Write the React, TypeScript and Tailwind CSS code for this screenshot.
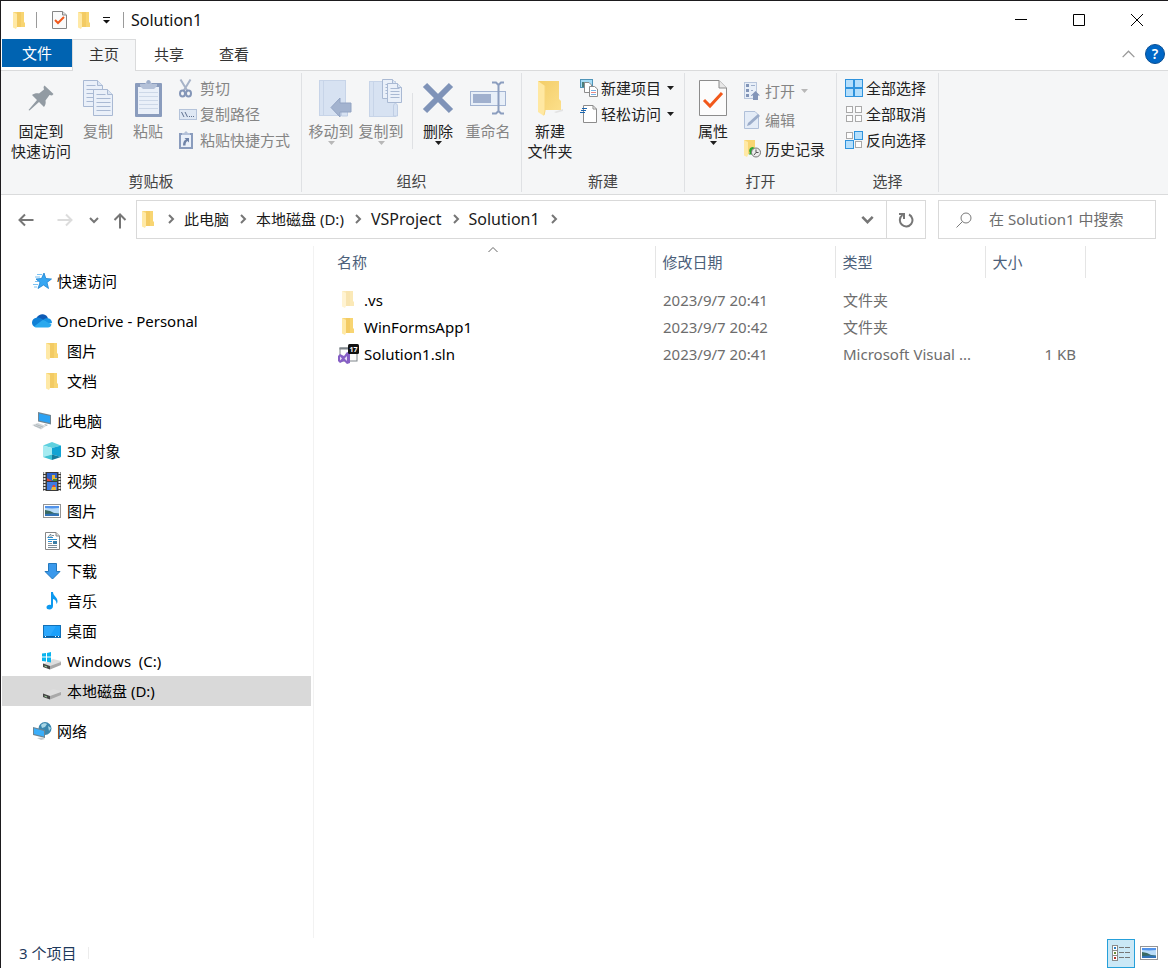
import type { ReactNode } from "react";

type IconProps = { className?: string };

/* ---------- icons ---------- */

function FolderIcon({ className = "" }: IconProps) {
  return (
    <svg width="13" height="17" viewBox="0 0 13 17" className={`shrink-0 ${className}`} aria-hidden="true">
      <path d="M0 0H11V10L12 11V15H3Z" fill="#f8d572" />
      <path d="M4 0H8V15H4Z" fill="#f0c45c" opacity="0.6" />
      <path d="M0 0L4 2V15L3 17L0 15.500Z" fill="#ffe9a6" />
    </svg>
  );
}

function BigFolderIcon() {
  return (
    <svg width="26" height="35" viewBox="0 0 26 35" aria-hidden="true">
      <defs>
        <linearGradient id="bigFolder" x1="0" y1="0" x2="1" y2="1">
          <stop offset="0" stopColor="#f3cd68" />
          <stop offset="1" stopColor="#fcdf8a" />
        </linearGradient>
      </defs>
      <path d="M17 31L26 28V30L19 32Z" fill="#e3e3e3" />
      <path d="M1 0H22V18L24 20V29H7Z" fill="url(#bigFolder)" />
      <path d="M1 0L8 5V30L7 35L1 31Z" fill="#ffe8a2" />
      <path d="M8 5V30L7 34" stroke="#f7d67c" fill="none" />
    </svg>
  );
}

function CheckDocIcon({ big = false }: { big?: boolean }) {
  return big ? (
    <svg width="28" height="36" viewBox="0 0 28 36" aria-hidden="true">
      <path d="M0.500 0.500H20L27.500 8V35.500H0.500Z" fill="#fcfcfc" stroke="#8c8c8c" />
      <path d="M20 0.500V8H27.500" fill="#e8e8e8" stroke="#8c8c8c" />
      <path d="M5 20L11 26L23 13" fill="none" stroke="#f1581b" strokeWidth="3" />
    </svg>
  ) : (
    <svg width="15" height="18" viewBox="0 0 15 18" aria-hidden="true">
      <path d="M0.500 0.500H10.500L14.500 4V17.500H0.500Z" fill="#fafafa" stroke="#868686" />
      <path d="M10.500 0.500V4H14.500" fill="#ddd" stroke="#868686" />
      <path d="M3 9L6 12L12 6" fill="none" stroke="#f1581b" strokeWidth="2" />
    </svg>
  );
}

function Caret({ className = "text-[#1e1e1e]" }: IconProps) {
  return (
    <svg width="7" height="4" viewBox="0 0 7 4" className={`shrink-0 ${className}`} aria-hidden="true">
      <path d="M0 0H7L3.500 4Z" fill="currentColor" />
    </svg>
  );
}

function PinIcon() {
  return (
    <svg width="26" height="26" viewBox="0 0 26 26" aria-hidden="true">
      <path
        d="M16.500 0.500L25.500 9L24 10.500L21.500 10L17.500 15.500C18 18 17.500 20 16 22L11 17L1.500 25.500L0.500 25L9 15L4 10C6 8.500 8.500 8 11 8.500L16 4.500L15.500 2Z"
        fill="#929ba3"
      />
    </svg>
  );
}

function Page({ x, y, w, h, fold, step }: { x: number; y: number; w: number; h: number; fold: number; step: number }) {
  const lines = [];
  for (let ly = y + 5; ly < y + h - 2; ly += step) lines.push(ly);
  return (
    <g stroke="#a9b9d3">
      <path d={`M${x} ${y}H${x + w - fold}L${x + w} ${y + fold}V${y + h}H${x}Z`} fill="#eaf0f9" />
      <path d={`M${x + w - fold} ${y}V${y + fold}H${x + w}`} fill="#dbe5f3" />
      {lines.map((ly) => (
        <path key={ly} d={`M${x + 3} ${ly}H${ly < y + fold + 1 ? x + w - fold - 2 : x + w - 2}`} />
      ))}
    </g>
  );
}

function CopyIcon() {
  return (
    <svg width="31" height="37" viewBox="0 0 31 37" aria-hidden="true">
      <Page x={0.5} y={0.5} w={19} h={26} fold={5} step={4} />
      <Page x={10.5} y={9.5} w={19} h={26} fold={5} step={4} />
    </svg>
  );
}

function PasteIcon() {
  return (
    <svg width="27" height="37" viewBox="0 0 27 37" aria-hidden="true">
      <rect x="0" y="3" width="27" height="34" rx="1" fill="#8a9cbd" />
      <rect x="3" y="7" width="21" height="27" fill="#eaf0f9" />
      {[12, 16, 20, 24, 28].map((y) => (
        <path key={y} d={`M4 ${y + 0.5}H23`} stroke="#cdd8e8" />
      ))}
      <path d="M5 4H10L12 1H15L17 4H22V6L19 9H8L5 6Z" fill="#b4c1d8" />
      <circle cx="13.500" cy="2" r="2" fill="#9fafca" />
    </svg>
  );
}

function CutIcon() {
  return (
    <svg width="13" height="19" viewBox="0 0 13 19" fill="none" aria-hidden="true">
      <path d="M1.500 0.500L8.500 12M11.500 0.500L4.500 12" stroke="#a7b3c8" strokeWidth="2" />
      <ellipse cx="3.500" cy="14.500" rx="2.500" ry="3" stroke="#8496b8" strokeWidth="2" />
      <ellipse cx="9.500" cy="14.500" rx="2.500" ry="3" stroke="#8496b8" strokeWidth="2" />
    </svg>
  );
}

function CopyPathIcon() {
  return (
    <svg width="18" height="11" viewBox="0 0 18 11" aria-hidden="true">
      <rect x="0.500" y="0.500" width="17" height="10" fill="#dfe8f4" stroke="#b4c3da" />
      <path d="M2.500 3L5 8M6 3L8.500 8" stroke="#5f708f" />
      <path d="M10 7.500H11M12 7.500H13M14 7.500H15" stroke="#5f708f" />
    </svg>
  );
}

function ShortcutIcon() {
  return (
    <svg width="14" height="18" viewBox="0 0 14 18" aria-hidden="true">
      <rect x="0" y="2" width="14" height="16" fill="#8a9cbd" />
      <rect x="2" y="4" width="10" height="12" fill="#eaf0f9" />
      <path d="M3 2H5L7 0L9 2H11V4H3Z" fill="#b4c1d8" />
      <path d="M5.500 7H10V11.500L8.500 10C7 11 6.500 12 6.500 14.500H4C4 11 5 9.500 7 8.500Z" fill="#6f83a8" />
    </svg>
  );
}

function MoveToIcon() {
  return (
    <svg width="41" height="37" viewBox="-8 0 41 37" aria-hidden="true">
      <rect x="0.500" y="0.500" width="26" height="35" fill="#d7e2f2" stroke="#c7d4e8" />
      <path d="M4.500 1V35" stroke="#c7d4e8" />
      <path d="M22.500 23V36H28.500V25" fill="#d7e2f2" stroke="#c0cee4" />
      <path d="M12 27.500L21 18V23H32V32H21V37Z" fill="#a3b3cf" stroke="#93a4c3" />
    </svg>
  );
}

function CopyToIcon() {
  return (
    <svg width="44" height="38" viewBox="-10 0 44 38" aria-hidden="true">
      <rect x="0.500" y="2.500" width="26" height="35" fill="#d7e2f2" stroke="#c7d4e8" />
      <path d="M4.500 3V37" stroke="#c7d4e8" />
      <path d="M24.500 37V27Q24.500 24.500 26.500 24.500T28.500 27V37Z" fill="#d7e2f2" stroke="#c0cee4" />
      <Page x={13.5} y={0.5} w={14} h={19} fold={4} step={3} />
      <Page x={18.5} y={4.5} w={14} h={19} fold={4} step={3} />
    </svg>
  );
}

function DeleteIcon() {
  return (
    <svg width="32" height="32" viewBox="0 0 32 32" aria-hidden="true">
      <path d="M3 3L29 29M29 3L3 29" stroke="#7f93b8" strokeWidth="6" />
    </svg>
  );
}

function RenameIcon() {
  return (
    <svg width="37" height="34" viewBox="0 0 37 34" fill="none" aria-hidden="true">
      <rect x="0.500" y="10.500" width="35" height="14" fill="#e8eff8" stroke="#a3b4d2" />
      <rect x="3" y="13" width="18" height="9" fill="#a0b0ce" />
      <path d="M22 1.500H26L28.500 4L31 1.500H34M22 32.500H26L28.500 30L31 32.500H34M28.500 4V30" stroke="#8c9ebf" strokeWidth="2" />
    </svg>
  );
}

function NewItemIcon() {
  return (
    <svg width="18" height="18" viewBox="0 0 18 18" aria-hidden="true">
      <rect x="0.500" y="0.500" width="12" height="8" fill="#a6dcf5" stroke="#4f94b8" />
      <path d="M2 8V3H5V8Z" fill="#4a7f7a" />
      <path d="M4.500 3.500H9L11.500 6V13.500H4.500Z" fill="#fff" stroke="#8c8c8c" />
      <path d="M9.500 7.500H14.500L17.500 10V17.500H9.500Z" fill="#fff" stroke="#8c8c8c" />
      <path d="M11 11.500H16M11 15.500H16" stroke="#78b2e4" />
      <path d="M11 13.500H16" stroke="#e58a8a" />
    </svg>
  );
}

function EasyAccessIcon() {
  return (
    <svg width="18" height="18" viewBox="0 0 18 18" aria-hidden="true">
      <path d="M3.500 0.500H13L16.500 4V17.500H3.500Z" fill="#fff" stroke="#8c8c8c" />
      <path d="M13 0.500V4H16.500" fill="none" stroke="#8c8c8c" />
      <path d="M2 3.500H7M1 5.500H6M0 7.500H5" fill="none" stroke="#1b66b0" />
    </svg>
  );
}

function OpenIcon() {
  return (
    <svg width="16" height="18" viewBox="0 0 16 18" aria-hidden="true">
      <rect x="0.500" y="0.500" width="12" height="16" fill="#e8eff8" stroke="#b8c6dc" />
      <path d="M2 2H5V5H2ZM2 7H5V10H2ZM2 12H5V15H2Z" fill="#8295b8" />
      <path d="M7 3.500H11M7 8.500H9M7 13.500H8" stroke="#9fb0cc" />
      <path d="M11.500 9L16 13.500H14V18H9V13.500H7Z" fill="#8295b8" />
    </svg>
  );
}

function EditIcon() {
  return (
    <svg width="17" height="18" viewBox="0 0 17 18" aria-hidden="true">
      <path d="M0.500 0.500H11L14.500 4V17.500H0.500Z" fill="#e4ecf7" stroke="#b0c0d9" />
      <path d="M3 15L4 12L14 3L16 5L6 14Z" fill="#9bacc9" />
    </svg>
  );
}

function HistoryIcon() {
  return (
    <svg width="17" height="18" viewBox="0 0 17 18" aria-hidden="true">
      <path d="M0 0H11V14H3Z" fill="#f8d572" />
      <path d="M0 0L4 2V15L3 17L0 15.500Z" fill="#ffe9a6" />
      <path d="M9 7C5 7.500 4.500 11 6 13L4.500 14.500H10V10L8 11.500C7.500 10 8.500 9 11 8.500Z" fill="#2ea836" />
      <circle cx="12" cy="12.500" r="4.500" fill="#ececec" stroke="#777" />
      <path d="M12 9.500V12.500H14.500M12 12.500L10 15" stroke="#555" fill="none" />
    </svg>
  );
}

function SelectIcon({ on }: { on: boolean[] }) {
  const spots = [[0, 0], [9, 0], [0, 9], [9, 9]];
  return (
    <svg width="18" height="18" viewBox="0 0 18 18" aria-hidden="true">
      {spots.map(([x, y], i) =>
        on[i] ? (
          <rect key={i} x={x + 0.5} y={y + 0.5} width="8" height="8" fill="#b5dffc" stroke="#2f93dd" />
        ) : (
          <rect key={i} x={x + 1.5} y={y + 1.5} width="6" height="6" fill="#fdfdfd" stroke="#a9a9a9" />
        ),
      )}
    </svg>
  );
}

function Chevron({ dir, size = 10, width = 1, className = "" }: { dir: "up" | "down" | "right"; size?: number; width?: number; className?: string }) {
  const d = { up: "M0.500 7L5 2.500L9.500 7", down: "M1 3L5 7L9 3", right: "M3 1L7 5L3 9" }[dir];
  return (
    <svg width={size} height={size} viewBox="0 0 10 10" fill="none" className={`shrink-0 ${className}`} aria-hidden="true">
      <path d={d} stroke="currentColor" strokeWidth={width} />
    </svg>
  );
}

function ArrowIcon({ className = "" }: IconProps) {
  return (
    <svg width="16" height="14" viewBox="0 0 16 14" fill="none" className={className} aria-hidden="true">
      <path d="M1 7H15.500M7 1.500L1.500 7L7 12.500" stroke="currentColor" strokeWidth="2" />
    </svg>
  );
}

function StarIcon() {
  return (
    <svg width="19" height="17" viewBox="0 0 19 17" aria-hidden="true">
      <path d="M11 0L12.800 5.500L18.500 6L14 9.500L15.500 15.500L10.500 12L5 15.500L7 9.500L3 6L8.500 5.500Z" fill="#36a6f2" stroke="#1c82d0" strokeWidth="0.800" />
      <path d="M4 1.500H9M2 4H7M0 11.500H5M1 14H4M2 8.500H5" stroke="#7cc3f3" />
    </svg>
  );
}

function CloudIcon() {
  return (
    <svg width="20" height="14" viewBox="0 0 20 14" aria-hidden="true">
      <path d="M4.500 4C6 1 8.500 0 11 0.200C13.500 0.500 15.300 2 16 4.500L10 8Z" fill="#0d5ab5" />
      <path d="M4.500 3.800C7 3 9 4.500 11.500 6L3 13C1 12.500 0 10.500 0 8.500C0 6 2 4 4.500 3.800Z" fill="#1080d6" />
      <path d="M11 6C12.500 4.500 14 4 16 4.300C18.500 4.800 20 6.500 20 9L16 10Z" fill="#1694e4" />
      <path d="M11 5.800L19.500 10.500C19 12.300 17.800 13.500 16 13.500H4.500C3.500 13.500 2.500 13 2 12.500Z" fill="#2aa9ee" />
    </svg>
  );
}

function ComputerIcon() {
  return (
    <svg width="20" height="18" viewBox="0 0 20 18" aria-hidden="true">
      <path d="M6 0L19 3V12.500L6 9.500Z" fill="#6f8593" />
      <path d="M7 1.500L18 4V11L7 8.500Z" fill="#2ba2f4" />
      <path d="M0 13L6 11L14 14L9 17.500Z" fill="#d3d8db" />
      <path d="M2 13.500L9 16M4 12.500L11 15" stroke="#aab2b6" strokeWidth="0.800" />
      <path d="M12 12L16 13L14 14Z" fill="#a0abb3" />
    </svg>
  );
}

function CubeIcon() {
  return (
    <svg width="18" height="18" viewBox="0 0 18 18" aria-hidden="true">
      <path d="M9 0L18 3.500L9 6L0 3.500Z" fill="#5fd0de" />
      <path d="M0 3.500L9 6V12.500L0 15Z" fill="#a5ebf1" />
      <path d="M9 6L18 3.500V15L9 12.500Z" fill="#11a3d3" />
      <path d="M0 15L9 12.500V18Z" fill="#3fc1d2" />
      <path d="M9 12.500L18 15L9 18Z" fill="#147c9d" />
    </svg>
  );
}

function VideoIcon() {
  return (
    <svg width="18" height="19" viewBox="0 0 18 19" aria-hidden="true">
      <rect width="18" height="19" fill="#3a3a3a" />
      <rect x="4" y="1" width="10" height="8" fill="#2f62c9" />
      <rect x="4" y="10" width="10" height="8" fill="#3f7be0" />
      <path d="M9 3H12V6H14V8H9ZM9 15H13V18H8Z" fill="#e8b93a" />
      <path d="M4 6L9 9H4ZM10 13H12V15H9Z" fill="#dd4a3a" />
      <path d="M10 7H14V9H10Z" fill="#3f8a3a" />
      <path d="M1.500 0V19M16.500 0V19" stroke="#e6e6e6" strokeWidth="2" strokeDasharray="2 1" />
    </svg>
  );
}

function PictureIcon() {
  return (
    <svg width="18" height="14" viewBox="0 0 18 14" aria-hidden="true">
      <rect x="0.500" y="0.500" width="17" height="13" fill="#fff" stroke="#959595" />
      <rect x="2" y="2" width="14" height="10" fill="#b9dcf8" />
      <path d="M2 2H16V4L9 4.500L2 4Z" fill="#5293ea" />
      <path d="M2 6L7 7L11 9L16 9.500V10H2Z" fill="#396a62" />
      <path d="M2 10L10 9.500L16 10V12H2Z" fill="#3173b8" />
    </svg>
  );
}

function DocIcon() {
  return (
    <svg width="15" height="18" viewBox="0 0 15 18" aria-hidden="true">
      <path d="M0.500 0.500H11L14.500 4V17.500H0.500Z" fill="#fff" stroke="#868686" />
      <path d="M11 0.500V4H14.500" fill="#ddd" stroke="#868686" />
      <path d="M3 5.500L5 2.500H6V5.500M7 3.500H9M3 13.500H12M3 15.500H12" stroke="#7b8b97" fill="none" />
      <path d="M2.500 5.500H8M3 7.500H12M3 9.500H7" stroke="#2b90d2" />
      <rect x="8" y="9" width="4" height="3" fill="#3c7ea6" />
      <path d="M3 11.500H7" stroke="#999" />
    </svg>
  );
}

function DownloadIcon() {
  return (
    <svg width="17" height="17" viewBox="0 0 17 17" aria-hidden="true">
      <path d="M4.500 0.500H12.500V8.500H16L8.500 16L1 8.500H4.500Z" fill="#3a99ec" stroke="#2478bd" />
    </svg>
  );
}

function MusicIcon() {
  return (
    <svg width="12" height="18" viewBox="0 0 12 18" aria-hidden="true">
      <path d="M5 0H7C7 4 11.500 5 11.500 9C11.500 10.500 11 11.500 10.500 12C10.500 9 9 7.500 7 7V14C7 16 5.500 17.500 3.500 17.500C1.500 17.500 0.500 16.500 0.500 15.200C0.500 13.200 3 12 5 13Z" fill="#0d99ef" />
    </svg>
  );
}

function DesktopIcon() {
  return (
    <svg width="18" height="13" viewBox="0 0 18 13" aria-hidden="true">
      <rect x="0.500" y="0.500" width="17" height="12" fill="#1ba0fb" stroke="#1370b5" />
      <path d="M1 1H13L7 11H1Z" fill="#3db0ff" opacity="0.500" />
      <path d="M1 11.500H17" stroke="#0c5c9d" />
      <path d="M2 11.500H3M12 11.500H13M15 11.500H16" stroke="#fff" />
    </svg>
  );
}

function DriveIcon({ windows = false }: { windows?: boolean }) {
  return (
    <svg width="20" height="18" viewBox="0 0 20 18" aria-hidden="true">
      <path d="M1 12L11 7L19 9V11L8 15Z" fill="#dedede" />
      <path d="M1 11.500L8 14V17.500L1 15Z" fill="#454545" />
      <path d="M8 14L19 10V13L8 17.500Z" fill="#a9a9a9" />
      <path d="M2.500 14L5 15" stroke="#9fd69f" />
      {windows && <path d="M0 1.500L4 1V4.500H0ZM5 1L9 0V4.500H5ZM0 5.500H4V9.500L0 9ZM5 5.500H9V10.500L5 9.800Z" fill="#09b4ee" />}
    </svg>
  );
}

function NetworkIcon() {
  return (
    <svg width="19" height="18" viewBox="0 0 19 18" aria-hidden="true">
      <circle cx="12" cy="6.500" r="6.500" fill="#3b87ae" />
      <path d="M8 3C10 0.500 13 1 14 2L12 5L9 6ZM15 4L18 6L16 9Z" fill="#a9d7e6" />
      <path d="M0 5L12 8V16L0 13Z" fill="#6c8594" />
      <path d="M1 6.300L11 9V14.500L1 12Z" fill="#3aaefa" />
      <path d="M4 16L9 15.500L12 17L8 18Z" fill="#c4cacd" />
    </svg>
  );
}

function SolutionIcon() {
  return (
    <svg width="21" height="20" viewBox="0 0 21 20" className="shrink-0" aria-hidden="true">
      <rect x="2" y="4" width="17" height="13" fill="#fdfdfd" stroke="#7e858a" />
      <path d="M1.500 4.500H18.500" stroke="#7e858a" strokeWidth="2" />
      <path d="M9 8L12 9V19L9 20L6 17L2 19L0 17V12L2 10L6 12Z" fill="#865fc5" />
      <path d="M2 12.500L4 14.500L2 16.500ZM9 12V17L6.500 14.500Z" fill="#e9def8" />
      <rect x="10" y="0" width="11" height="10" rx="1.500" fill="#111" />
      <text x="15.500" y="8" textAnchor="middle" fontSize="7" fontWeight="700" fill="#fff">17</text>
    </svg>
  );
}

/* ---------- ribbon ---------- */

function RibbonGroup({ title, className, inner, children }: { title: string; className: string; inner: string; children: ReactNode }) {
  return (
    <section aria-label={title} className={`my-0.5 flex shrink-0 flex-col border-r border-[#dfe1e4] pb-px ${className}`}>
      <div className={`flex grow items-start ${inner}`}>{children}</div>
      <div className="h-5 text-center leading-5 text-[#444]">{title}</div>
    </section>
  );
}

function BigButton({ icon, lines, disabled, caret, className = "w-[50px]" }: { icon: ReactNode; lines: string[]; disabled?: boolean; caret?: boolean; className?: string }) {
  return (
    <button
      disabled={disabled}
      className={`flex shrink-0 flex-col items-center leading-5 ${disabled ? "text-[#858585]" : "text-[#222]"} ${className}`}
    >
      <span className="flex h-12 items-center justify-center pt-0.5">{icon}</span>
      {lines.map((line) => (
        <span key={line} className="whitespace-nowrap">{line}</span>
      ))}
      {caret && <Caret className={disabled ? "text-[#b8b8b8]" : "text-[#1e1e1e]"} />}
    </button>
  );
}

function SmallButton({ icon, label, disabled, caret }: { icon: ReactNode; label: string; disabled?: boolean; caret?: boolean }) {
  return (
    <button disabled={disabled} className={`flex h-[26px] items-center whitespace-nowrap ${disabled ? "text-[#858585]" : "text-[#222]"}`}>
      <span className="flex w-[21px] justify-start">{icon}</span>
      {label}
      {caret && (
        <span className="pl-1.5">
          <Caret className={disabled ? "text-[#b8b8b8]" : "text-[#1e1e1e]"} />
        </span>
      )}
    </button>
  );
}

function Ribbon() {
  return (
    <div className="flex h-[124px] overflow-hidden border-b border-[#dadbdc] bg-[#f5f6f7]">
      <RibbonGroup title="剪贴板" className="w-[301px]" inner="pl-2">
        <BigButton icon={<PinIcon />} lines={["固定到", "快速访问"]} className="w-16" />
        <BigButton icon={<CopyIcon />} lines={["复制"]} disabled />
        <BigButton icon={<PasteIcon />} lines={["粘贴"]} disabled />
        <div className="pt-0.5 pl-1.5">
          <SmallButton icon={<CutIcon />} label="剪切" disabled />
          <SmallButton icon={<CopyPathIcon />} label="复制路径" disabled />
          <SmallButton icon={<ShortcutIcon />} label="粘贴快捷方式" disabled />
        </div>
      </RibbonGroup>
      <RibbonGroup title="组织" className="w-[220px]" inner="pl-1">
        <BigButton icon={<MoveToIcon />} lines={["移动到"]} disabled caret />
        <BigButton icon={<CopyToIcon />} lines={["复制到"]} disabled caret />
        <div className="mt-5 ml-1.5 h-14 w-px bg-[#dfe1e4]" />
        <BigButton icon={<DeleteIcon />} lines={["删除"]} caret />
        <BigButton icon={<RenameIcon />} lines={["重命名"]} disabled />
      </RibbonGroup>
      <RibbonGroup title="新建" className="w-[163px]" inner="pl-[3px]">
        <BigButton icon={<BigFolderIcon />} lines={["新建", "文件夹"]} />
        <div className="pt-0.5 pl-[5px]">
          <SmallButton icon={<NewItemIcon />} label="新建项目" caret />
          <SmallButton icon={<EasyAccessIcon />} label="轻松访问" caret />
        </div>
      </RibbonGroup>
      <RibbonGroup title="打开" className="w-[152px]" inner="pl-[3px]">
        <BigButton icon={<CheckDocIcon big />} lines={["属性"]} caret />
        <div className="flex flex-col gap-[3px] pt-[5px] pl-1.5">
          <SmallButton icon={<OpenIcon />} label="打开" disabled caret />
          <SmallButton icon={<EditIcon />} label="编辑" disabled />
          <SmallButton icon={<HistoryIcon />} label="历史记录" />
        </div>
      </RibbonGroup>
      <RibbonGroup title="选择" className="w-[102px]" inner="pl-2">
        <div className="pt-0.5">
          <SmallButton icon={<SelectIcon on={[true, true, true, true]} />} label="全部选择" />
          <SmallButton icon={<SelectIcon on={[false, false, false, false]} />} label="全部取消" />
          <SmallButton icon={<SelectIcon on={[false, true, true, false]} />} label="反向选择" />
        </div>
      </RibbonGroup>
    </div>
  );
}

/* ---------- window chrome ---------- */

function TitleBar() {
  return (
    <header className="flex h-[38px] items-center pr-0.5">
      <div className="flex items-center pl-3">
        <FolderIcon />
        <span className="ml-2.5 h-4 w-px bg-[#9a9a9a]" />
        <button aria-label="属性" className="ml-[15px]"><CheckDocIcon /></button>
        <button aria-label="新建文件夹" className="ml-[11px]"><FolderIcon /></button>
        <button aria-label="自定义快速访问工具栏" className="ml-3">
          <svg width="7" height="7" viewBox="0 0 7 7" aria-hidden="true">
            <path d="M0 0H7V1H0ZM0 3H7L3.500 6.500Z" fill="#111" />
          </svg>
        </button>
        <span className="ml-[13px] h-4 w-px bg-[#9a9a9a]" />
      </div>
      <h1 className="grow pl-[7px] text-base text-[#111]">Solution1</h1>
      <button aria-label="最小化" className="flex h-full w-[58px] items-center justify-center">
        <svg width="12" height="12" viewBox="0 0 12 12" aria-hidden="true"><path d="M0 5.500H12" stroke="#000" /></svg>
      </button>
      <button aria-label="最大化" className="flex h-full w-[58px] items-center justify-center">
        <svg width="12" height="12" viewBox="0 0 12 12" fill="none" aria-hidden="true"><path d="M0.500 0.500H11.500V11.500H0.500Z" stroke="#000" /></svg>
      </button>
      <button aria-label="关闭" className="flex h-full w-[58px] items-center justify-center">
        <svg width="12" height="12" viewBox="0 0 12 12" aria-hidden="true"><path d="M0 0L12 12M12 0L0 12" stroke="#000" /></svg>
      </button>
    </header>
  );
}

function Tabs() {
  return (
    <div className="flex h-8 items-start border-b border-[#dadbdc] pl-px text-[#333]">
      <button className="h-7 w-[70px] bg-[#0063b1] text-white">文件</button>
      <button className="h-8 w-16 border border-b-0 border-[#dadbdc] bg-[#f5f6f7] pb-[3px]">主页</button>
      <button className="h-[30px] w-[66px]">共享</button>
      <button className="h-[30px] w-16">查看</button>
      <div className="ml-auto flex h-[30px] items-center gap-2.5 pr-[3px]">
        <button aria-label="最小化功能区" className="text-[#999]"><Chevron dir="up" size={13} /></button>
        <button aria-label="帮助" className="h-5 w-5 rounded-full border border-[#0a4f94] bg-[#0067c6] text-sm leading-4 font-semibold text-white">
          ?
        </button>
      </div>
    </div>
  );
}

const crumbs = [
  { label: "此电脑", size: "text-[15px]" },
  { label: "本地磁盘 (D:)", size: "text-[15px]" },
  { label: "VSProject", size: "text-base" },
  { label: "Solution1", size: "text-base" },
];

function AddressRow() {
  return (
    <div className="flex items-center pt-[5px] pr-3 pb-[7px] pl-[17px]">
      <button aria-label="返回" className="text-[#767676]"><ArrowIcon /></button>
      <button aria-label="前进" disabled className="ml-[23px] text-[#dcdcdc]"><ArrowIcon className="rotate-180" /></button>
      <button aria-label="最近浏览的位置" className="ml-4 text-[#767676]"><Chevron dir="down" width={2} /></button>
      <button aria-label="向上" className="ml-[13px] pt-0.5 text-[#767676]"><ArrowIcon className="rotate-90" /></button>
      <nav aria-label="地址" className="ml-2 flex h-[39px] grow items-center border border-[#d9d9d9] text-[#1a1a1a]">
        <span className="pr-[11px] pl-[5px]"><FolderIcon /></span>
        {crumbs.map((c) => (
          <span key={c.label} className="flex items-center pb-0.5">
            <Chevron dir="right" width={2} className="text-[#767676]" />
            <a href="#" className={`pr-[9px] pl-2 leading-5 whitespace-nowrap ${c.size}`}>{c.label}</a>
          </span>
        ))}
        <span className="pb-0.5"><Chevron dir="right" width={2} className="text-[#767676]" /></span>
        <button aria-label="以前的位置" className="ml-auto px-3 text-[#767676]"><Chevron dir="down" size={13} width={2} /></button>
        <button aria-label="刷新" className="flex h-full w-[39px] items-center justify-center border-l border-[#d9d9d9] text-[#767676]">
          <svg width="16" height="16" viewBox="0 0 16 16" fill="none" aria-hidden="true">
            <path d="M11 2.500A6.300 6.300 0 1 1 4.500 3" stroke="currentColor" strokeWidth="2" />
            <path d="M1 2H6V7" stroke="currentColor" strokeWidth="2" />
          </svg>
        </button>
      </nav>
      <label className="ml-3 flex h-[39px] w-[218px] items-center gap-[17px] border border-[#d9d9d9] pl-[17px]">
        <svg width="16" height="16" viewBox="0 0 16 16" fill="none" className="shrink-0" aria-hidden="true">
          <circle cx="10" cy="6" r="5" stroke="#7a7a7a" />
          <path d="M6.500 9.500L0.500 15.500" stroke="#7a7a7a" />
        </svg>
        <input type="search" aria-label="搜索" placeholder="在 Solution1 中搜索" className="w-full min-w-0 pb-0.5 outline-none placeholder:text-[#6d6d6d]" />
      </label>
    </div>
  );
}

/* ---------- navigation pane ---------- */

type Node = { label: string; icon: ReactNode; selected?: boolean };

const tree: (Node & { children?: Node[] })[] = [
  { label: "快速访问", icon: <StarIcon /> },
  {
    label: "OneDrive - Personal",
    icon: <CloudIcon />,
    children: [
      { label: "图片", icon: <FolderIcon /> },
      { label: "文档", icon: <FolderIcon /> },
    ],
  },
  {
    label: "此电脑",
    icon: <ComputerIcon />,
    children: [
      { label: "3D 对象", icon: <CubeIcon /> },
      { label: "视频", icon: <VideoIcon /> },
      { label: "图片", icon: <PictureIcon /> },
      { label: "文档", icon: <DocIcon /> },
      { label: "下载", icon: <DownloadIcon /> },
      { label: "音乐", icon: <MusicIcon /> },
      { label: "桌面", icon: <DesktopIcon /> },
      { label: "Windows  (C:)", icon: <DriveIcon windows /> },
      { label: "本地磁盘 (D:)", icon: <DriveIcon />, selected: true },
    ],
  },
  { label: "网络", icon: <NetworkIcon /> },
];

function TreeItem({ node, className }: { node: Node; className: string }) {
  return (
    <button className={`flex h-[30px] w-full items-center gap-[5px] whitespace-pre ${node.selected ? "bg-[#d9d9d9]" : ""} ${className}`}>
      <span className="flex w-5 shrink-0 justify-center">{node.icon}</span>
      {node.label}
    </button>
  );
}

function NavPane() {
  return (
    <nav aria-label="导航窗格" className="w-[313px] shrink-0 border-r border-[#f2f2f2] pt-5 pr-0.5 pl-px text-black">
      <ul className="flex flex-col gap-2.5">
        {tree.map((root) => (
          <li key={root.label}>
            <TreeItem node={root} className="pl-[30px]" />
            {root.children && (
              <ul>
                {root.children.map((child) => (
                  <li key={child.label}>
                    <TreeItem node={child} className="pl-10" />
                  </li>
                ))}
              </ul>
            )}
          </li>
        ))}
      </ul>
    </nav>
  );
}

/* ---------- file list ---------- */

const files = [
  { name: ".vs", icon: <FolderIcon className="opacity-50" />, date: "2023/9/7 20:41", type: "文件夹", size: "" },
  { name: "WinFormsApp1", icon: <FolderIcon />, date: "2023/9/7 20:42", type: "文件夹", size: "" },
  { name: "Solution1.sln", icon: <SolutionIcon />, date: "2023/9/7 20:41", type: "Microsoft Visual ...", size: "1 KB" },
];

function FileList() {
  return (
    <main className="min-w-0 grow overflow-hidden">
      <table className="w-[771px] table-fixed text-left text-[#6d6d6d]">
        <thead className="text-[#4c607a]">
          <tr className="h-8">
            <th className="relative w-[341px] border-r border-[#e5e5e5] pl-[23px] font-normal">
              名称
              <Chevron dir="up" className="absolute -top-px left-[174px] text-[#666]" />
            </th>
            <th className="w-[180px] border-r border-[#e5e5e5] pl-[7px] font-normal">修改日期</th>
            <th className="w-[150px] border-r border-[#e5e5e5] pl-[7px] font-normal">类型</th>
            <th className="w-[100px] border-r border-[#e5e5e5] pl-[7px] font-normal">大小</th>
          </tr>
        </thead>
        <tbody className="before:block before:h-2">
          {files.map((f) => (
            <tr key={f.name} className="h-[27px]">
              <td className="pl-6 text-black">
                <span className="flex items-center gap-1.5">
                  <span className="flex w-5 shrink-0 justify-center">{f.icon}</span>
                  {f.name}
                </span>
              </td>
              <td className="pl-2">{f.date}</td>
              <td className="pl-2 whitespace-nowrap">{f.type}</td>
              <td className="pr-[9px] text-right">{f.size}</td>
            </tr>
          ))}
        </tbody>
      </table>
    </main>
  );
}

function StatusBar() {
  return (
    <footer className="flex h-[30px] items-center pl-[18px] text-[#1e395b]">
      <span>3 个项目</span>
      <span className="ml-3 h-3 w-px bg-[#ececec]" />
      <div className="ml-auto flex items-center gap-[5px] pr-2.5">
        <button aria-label="详细信息" aria-pressed="true" className="flex h-[29px] w-7 items-center justify-center border border-[#26a0da] bg-[#cbe8f6]">
          <svg width="18" height="17" viewBox="0 0 18 17" aria-hidden="true">
            {[0, 5, 10].map((y) => (
              <g key={y}>
                <rect x="0.500" y={y + 0.5} width="5" height="5" fill="#fff" stroke="#8a8a8a" />
                <path d={`M7 ${y + 2.5}H12M13 ${y + 2.5}H18`} stroke="#777" />
              </g>
            ))}
            <path d="M2 2H4V4H2Z" fill="#2b80c4" />
            <path d="M2 7H4V9H2Z" fill="#6b8e3a" />
            <path d="M2 12H4V14H2Z" fill="#b3352b" />
          </svg>
        </button>
        <button aria-label="大图标"><PictureIcon /></button>
      </div>
    </footer>
  );
}

export default function App() {
  return (
    <div className="flex min-h-screen flex-col border-t border-l border-[#1d1b1e] bg-white font-['Noto_Sans','Noto_Sans_CJK_SC',sans-serif] text-[15px] leading-5">
      <TitleBar />
      <Tabs />
      <Ribbon />
      <AddressRow />
      <div className="flex grow">
        <NavPane />
        <FileList />
      </div>
      <StatusBar />
    </div>
  );
}
